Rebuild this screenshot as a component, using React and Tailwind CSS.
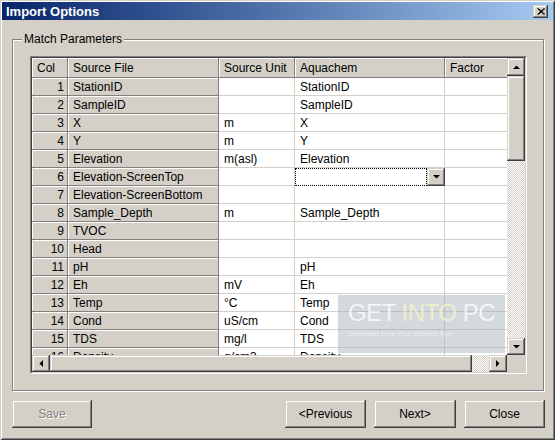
import React from 'react'

const rows = [
  [1, 'StationID', '', 'StationID'],
  [2, 'SampleID', '', 'SampleID'],
  [3, 'X', 'm', 'X'],
  [4, 'Y', 'm', 'Y'],
  [5, 'Elevation', 'm(asl)', 'Elevation'],
  [6, 'Elevation-ScreenTop', '', null],
  [7, 'Elevation-ScreenBottom', '', ''],
  [8, 'Sample_Depth', 'm', 'Sample_Depth'],
  [9, 'TVOC', '', ''],
  [10, 'Head', '', ''],
  [11, 'pH', '', 'pH'],
  [12, 'Eh', 'mV', 'Eh'],
  [13, 'Temp', '°C', 'Temp'],
  [14, 'Cond', 'uS/cm', 'Cond'],
  [15, 'TDS', 'mg/l', 'TDS'],
  [16, 'Density', 'g/cm3', 'Density'],
]

const raised =
  'bg-[#d4d0c8] shadow-[inset_-1px_-1px_0_#404040,inset_1px_1px_0_#d4d0c8,inset_-2px_-2px_0_#808080,inset_2px_2px_0_#fff]'
const fixedCell =
  'shrink-0 bg-[#d4d0c8] border-r border-b border-[#808080] shadow-[inset_1px_1px_0_#fff] whitespace-nowrap overflow-hidden'
const whiteCell = 'shrink-0 bg-white border-r border-b border-[#d4d0c8] whitespace-nowrap overflow-hidden'
const dither =
  'bg-[#d4d0c8] bg-[image:repeating-conic-gradient(#d4d0c8_0_25%,#ffffff_0_50%)] bg-[length:2px_2px]'

function Arrow({ dir }) {
  const pts = {
    up: '0,4 7,4 3.5,0.5',
    down: '0,0 7,0 3.5,3.5',
    left: '4,0 4,7 0.5,3.5',
    right: '0,0 0,7 3.5,3.5',
  }[dir]
  const vertical = dir === 'up' || dir === 'down'
  return (
    <svg width={vertical ? 7 : 4} height={vertical ? 4 : 7} viewBox={vertical ? '0 0 7 4' : '0 0 4 7'}>
      <polygon points={pts} fill="#000" />
    </svg>
  )
}

function ScrollBtn({ dir, className = '' }) {
  return (
    <div className={`${raised} flex items-center justify-center shrink-0 ${className}`}>
      <Arrow dir={dir} />
    </div>
  )
}

function GridRow({ n, src, unit, aq }) {
  return (
    <div className="flex h-[18px] leading-[18px]">
      <div className={`${fixedCell} w-[36px] text-right pr-[3px]`}>{n}</div>
      <div className={`${fixedCell} w-[151px] pl-[5px]`}>{src}</div>
      <div className={`${whiteCell} w-[76px] pl-[5px]`}>{unit}</div>
      {aq === null ? (
        <div className="w-[150px] shrink-0 flex bg-white">
          <div className="flex-1 border border-dotted border-black" />
          <ScrollBtn dir="down" className="w-[18px] h-[18px]" />
        </div>
      ) : (
        <div className={`${whiteCell} w-[150px] pl-[5px]`}>{aq}</div>
      )}
      <div className="w-[62px] shrink-0 bg-white border-b border-[#d4d0c8]" />
    </div>
  )
}

export default function App() {
  return (
    <div
      className="w-[555px] h-[440px] bg-[#d4d0c8] flex flex-col text-[12px] text-black shadow-[inset_1px_1px_0_#d4d0c8,inset_-1px_-1px_0_#404040,inset_2px_2px_0_#fff,inset_-2px_-2px_0_#808080] overflow-hidden"
      style={{ fontFamily: '"Liberation Sans", Arial, sans-serif' }}
    >
      {/* Title bar */}
      <div className="mx-[2px] mt-[2px] h-[18px] shrink-0 flex items-center bg-gradient-to-r from-[#0a246a] to-[#a6caf0] pl-[4px] pr-[5px]">
        <span className="text-white font-bold text-[13px] leading-none">Import Options</span>
        <div className="flex-1" />
        <div className={`${raised} w-[15px] h-[13px] flex items-center justify-center`}>
          <svg width="8" height="7" viewBox="0 0 8 7">
            <path d="M0.5 0.5 L7 6.5 M1.5 0.5 L8 6.5 M7 0.5 L0.5 6.5 M8 0.5 L1.5 6.5" stroke="#000" strokeWidth="1" />
          </svg>
        </div>
      </div>

      {/* Body */}
      <div className="flex flex-col pl-[12px] pr-[11px]">
        {/* Group box */}
        <div className="relative mt-[19px] w-[532px] border border-[#808080] shadow-[inset_1px_1px_0_#fff,1px_1px_0_#fff] pt-[16px] pb-[16px] pl-[17px] pr-[16px]">
          <span className="absolute -top-[8px] left-[9px] px-[2px] bg-[#d4d0c8] leading-[14px]">Match Parameters</span>

          {/* Grid */}
          <div className="w-[497px] border border-t-[#808080] border-l-[#808080] border-r-white border-b-white">
            <div className="border border-t-[#404040] border-l-[#404040] border-r-[#d4d0c8] border-b-[#d4d0c8] h-[316px] flex bg-white">
              <div className="w-[475px] flex flex-col">
                <div className="relative h-[297px] overflow-hidden">
                  <div className="flex h-[20px] leading-[20px]">
                    <div className={`${fixedCell} w-[36px] pl-[5px]`}>Col</div>
                    <div className={`${fixedCell} w-[151px] pl-[5px]`}>Source File</div>
                    <div className={`${fixedCell} w-[76px] pl-[5px]`}>Source Unit</div>
                    <div className={`${fixedCell} w-[150px] pl-[5px]`}>Aquachem</div>
                    <div className={`${fixedCell} w-[62px] pl-[5px] border-r-0`}>Factor</div>
                  </div>
                  {rows.map(([n, src, unit, aq]) => (
                    <GridRow key={n} n={n} src={src} unit={unit} aq={aq} />
                  ))}

                  {/* Watermark */}
                  <div className="absolute left-[306px] top-[237px] w-[167px] h-[58px] bg-[rgba(160,170,182,0.45)] flex flex-col pl-[10px] pt-[4px]">
                    <span className="text-[24px] leading-[28px] tracking-[-0.5px] text-[rgba(255,255,255,0.75)]">
                      GET <span className="text-[rgba(245,245,200,0.8)]">INTO</span> PC
                    </span>
                    <span className="text-[7px] leading-[14px] text-[rgba(255,255,255,0.55)]">
                      Download Free Your Desired App
                    </span>
                  </div>
                </div>
                {/* Horizontal scrollbar */}
                <div className="h-[17px] flex bg-[#d4d0c8]">
                  <ScrollBtn dir="left" className="w-[18px] h-[17px]" />
                  <div className={`${raised} w-[422px] h-[17px]`} />
                  <div className={`flex-1 ${dither}`} />
                  <ScrollBtn dir="right" className="w-[18px] h-[17px]" />
                </div>
              </div>
              {/* Vertical scrollbar */}
              <div className="w-[18px] flex flex-col">
                <div className="h-[297px] flex flex-col">
                  <ScrollBtn dir="up" className="w-[18px] h-[18px]" />
                  <div className={`${raised} h-[85px] shrink-0`} />
                  <div className={`flex-1 ${dither}`} />
                  <ScrollBtn dir="down" className="w-[18px] h-[17px]" />
                </div>
                <div className="flex-1 bg-[#d4d0c8]" />
              </div>
            </div>
          </div>
        </div>

        {/* Buttons */}
        <div className="mt-[9px] flex items-center">
          <button className={`${raised} w-[80px] h-[28px] text-[#808080] [text-shadow:1px_1px_0_#fff]`}>Save</button>
          <div className="flex-1" />
          <div className="flex gap-[8px] -mr-[1px]">
            <button className={`${raised} w-[81px] h-[28px]`}>&lt;Previous</button>
            <button className={`${raised} w-[82px] h-[28px]`}>Next&gt;</button>
            <button className={`${raised} w-[81px] h-[28px]`}>Close</button>
          </div>
        </div>
      </div>
    </div>
  )
}
